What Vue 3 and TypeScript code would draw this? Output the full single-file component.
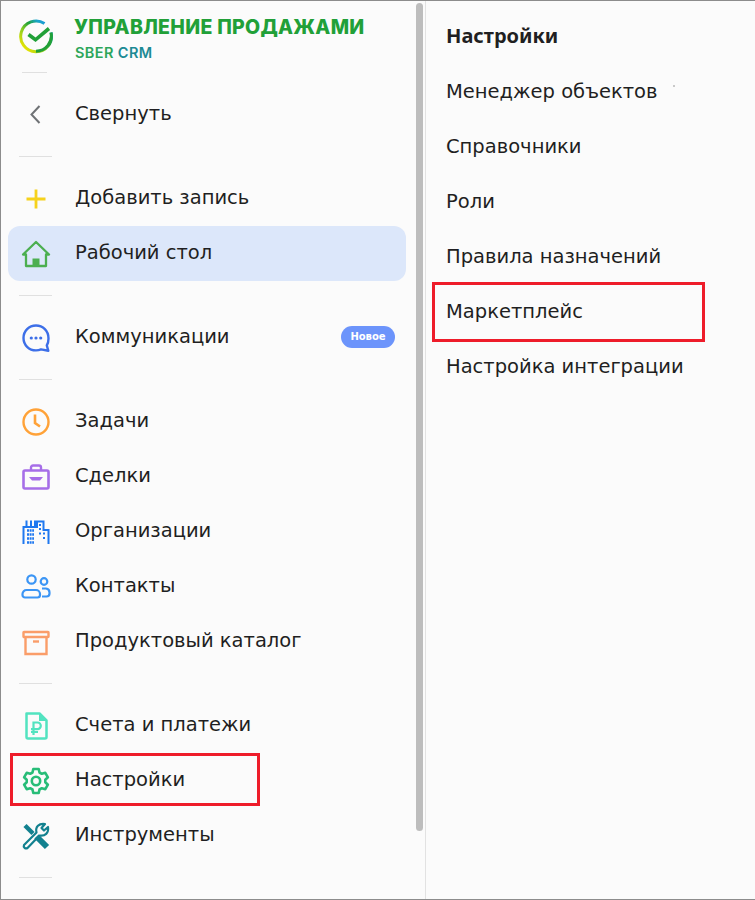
<script setup lang="ts">
type NavItem = { label: string; icon: string; active?: boolean; badge?: string; boxed?: boolean }

const groups: NavItem[][] = [
  [{ label: 'Свернуть', icon: 'back' }],
  [
    { label: 'Добавить запись', icon: 'plus' },
    { label: 'Рабочий стол', icon: 'home', active: true },
  ],
  [{ label: 'Коммуникации', icon: 'chat', badge: 'Новое' }],
  [
    { label: 'Задачи', icon: 'clock' },
    { label: 'Сделки', icon: 'case' },
    { label: 'Организации', icon: 'city' },
    { label: 'Контакты', icon: 'people' },
    { label: 'Продуктовый каталог', icon: 'box' },
  ],
  [
    { label: 'Счета и платежи', icon: 'bill' },
    { label: 'Настройки', icon: 'gear', boxed: true },
    { label: 'Инструменты', icon: 'tools' },
  ],
]

const subItems = [
  { label: 'Менеджер объектов' },
  { label: 'Справочники' },
  { label: 'Роли' },
  { label: 'Правила назначений' },
  { label: 'Маркетплейс', boxed: true },
  { label: 'Настройка интеграции' },
]
</script>

<template>
  <div class="window">
    <aside class="sidebar">
      <header class="brand">
        <svg class="logo" width="36" height="36" viewBox="0 0 36 36" fill="none">
          <defs>
            <linearGradient id="ring" x1="4" y1="30" x2="30" y2="3" gradientUnits="userSpaceOnUse">
              <stop offset="0" stop-color="#f2e500" />
              <stop offset="0.35" stop-color="#8fd01f" />
              <stop offset="0.6" stop-color="#21a038" />
              <stop offset="0.8" stop-color="#19a5c8" />
              <stop offset="1" stop-color="#1c8fe0" />
            </linearGradient>
          </defs>
          <path d="M26.5 5.500A15.400 15.400 0 1 0 33 14.500" stroke="url(#ring)" stroke-width="3" />
          <path d="M33 14.500A15.400 15.400 0 0 1 18 33.200" stroke="#21a038" stroke-width="3" />
          <path d="M10.500 16.500l7 5.300L31 10.500" stroke="#21a038" stroke-width="3.600" />
        </svg>
        <div class="brand-text">
          <div class="brand-title">УПРАВЛЕНИЕ ПРОДАЖАМИ</div>
          <div class="brand-sub"><span class="sber">SBER</span><span class="crm">CRM</span></div>
        </div>
      </header>
      <div class="rule rule-short"></div>

      <template v-for="(group, g) in groups" :key="g">
        <div v-if="g > 0" class="rule"></div>
        <div class="group">
          <div
            v-for="item in group"
            :key="item.label"
            :class="['row', { 'row-active': item.active }]"
          >
            <span class="ico">
              <svg width="30" height="30" viewBox="0 0 30 30" fill="none">
                <path v-if="item.icon === 'back'" d="M18.500 6l-8 8.500 8 8.500" stroke="#6f7275" stroke-width="2" />
                <path v-else-if="item.icon === 'plus'" d="M15 5.500v19M5.500 15h19" stroke="#f6d21c" stroke-width="2.800" />
                <template v-else-if="item.icon === 'home'">
                  <path d="M2 15.500L15 3l13 12.500H25V27H5V15.500Z" stroke="#4caf50" stroke-width="2.300" stroke-linejoin="round" />
                  <path d="M11.500 27V19.500h7V27Z" fill="#4caf50" />
                </template>
                <template v-else-if="item.icon === 'chat'">
                  <path d="M15 2.500C7.900 2.500 2.500 8 2.500 15S7.900 27.400 15 27.400c2 0 3.700-.4 5-1l7.300 1.400-1.500-5.400c1.100-2 1.700-4.400 1.700-7C27.500 8 22 2.500 15 2.500Z" stroke="#3d6fe8" stroke-width="2.400" stroke-linejoin="round" />
                  <circle cx="10.300" cy="15" r="1.600" fill="#3d6fe8" />
                  <circle cx="15" cy="15" r="1.600" fill="#3d6fe8" />
                  <circle cx="19.700" cy="15" r="1.600" fill="#3d6fe8" />
                </template>
                <template v-else-if="item.icon === 'clock'">
                  <circle cx="15" cy="15" r="12.500" stroke="#ffa238" stroke-width="2.400" />
                  <path d="M14 7.500V16l5 3.500" stroke="#ffa238" stroke-width="2.600" />
                </template>
                <template v-else-if="item.icon === 'case'">
                  <path d="M10 8.500V5.500a2 2 0 0 1 2-2h6a2 2 0 0 1 2 2v3" stroke="#a66ee8" stroke-width="2.400" />
                  <rect x="2.500" y="8.500" width="25" height="18" rx="1.500" stroke="#a66ee8" stroke-width="2.600" />
                  <path d="M8 15h14l-3 3.500h-8Z" fill="#a66ee8" />
                </template>
                <template v-else-if="item.icon === 'city'">
                  <path d="M2.500 27V10H16V4.500h6.500V13h5V27" stroke="#1f78f0" stroke-width="2" />
                  <path d="M5.500 10V3.500M10 10V3.500M14 10V3.500" stroke="#1f78f0" stroke-width="2" />
                  <path d="M6 13.500h7M6 17.500h7M6 21.500h7M6 25.500h7" stroke="#1f78f0" stroke-width="2.400" stroke-dasharray="2 .6" />
                  <path d="M18 8h2M18 12h2M18 16.500h2M22 16.500h2M22 21h2" stroke="#1f78f0" stroke-width="2.200" />
                </template>
                <template v-else-if="item.icon === 'people'">
                  <circle cx="10.500" cy="7.500" r="4.200" stroke="#3b95f5" stroke-width="2.200" />
                  <path d="M1.500 22a4 4 0 0 1 4-4h9.500a4 4 0 0 1 4 4v1a2.500 2.500 0 0 1-2.500 2.500H4A2.500 2.500 0 0 1 1.500 23Z" stroke="#3b95f5" stroke-width="2.200" />
                  <circle cx="23" cy="9.500" r="3.300" stroke="#3b95f5" stroke-width="2.200" />
                  <path d="M21 16.500h4a4 4 0 0 1 3.500 4v1a3 3 0 0 1-3 3H21" stroke="#3b95f5" stroke-width="2.200" />
                </template>
                <template v-else-if="item.icon === 'box'">
                  <rect x="2.500" y="5" width="25" height="5" rx=".5" stroke="#fa9d69" stroke-width="2.400" />
                  <path d="M4.500 10v17h21V10" stroke="#fa9d69" stroke-width="2.400" />
                  <path d="M12 14.500h6" stroke="#fa9d69" stroke-width="2.400" />
                </template>
                <template v-else-if="item.icon === 'bill'">
                  <path d="M5.500 2.500h13l7 7V26a1.500 1.500 0 0 1-1.500 1.500H7A1.500 1.500 0 0 1 5.500 26Z" stroke="#52e3c0" stroke-width="2.500" stroke-linejoin="round" />
                  <path d="M18 3v7h7" fill="#52e3c0" />
                  <path d="M12.500 24V11.500h4a3.300 3.300 0 0 1 0 6.600h-6.500M10 21h7" stroke="#52e3c0" stroke-width="2.200" />
                </template>
                <template v-else-if="item.icon === 'gear'">
                  <path d="M12.300 3h5.400l.8 3.500 2.300 1.300 3.500-1 2.600 4.500-2.600 2.500v2.400l2.600 2.500-2.600 4.500-3.500-1-2.300 1.300-.8 3.500h-5.400l-.8-3.500-2.300-1.300-3.500 1-2.600-4.500 2.600-2.500v-2.400l-2.600-2.500 2.600-4.500 3.500 1 2.300-1.300Z" stroke="#28bd78" stroke-width="2.600" stroke-linejoin="round" />
                  <circle cx="15" cy="15" r="4.200" stroke="#28bd78" stroke-width="2.600" />
                </template>
                <template v-else-if="item.icon === 'tools'">
                  <path d="M4 4.500l8 8" stroke="#12818f" stroke-width="4.400" />
                  <path d="M15.500 15.500L26 26" stroke="#12818f" stroke-width="6" />
                  <path d="M3 24L15.500 11.500C14 6 18 2 24 3l-3.500 4 2.500 2.500L27 6c1 6-3 9.500-8.500 8.500L6.500 27A2.400 2.400 0 0 1 3 24Z" stroke="#12818f" stroke-width="2.200" stroke-linejoin="round" />
                </template>
              </svg>
            </span>
            <span class="label">{{ item.label }}</span>
            <span v-if="item.badge" class="badge">{{ item.badge }}</span>
            <span v-if="item.boxed" class="mark mark-settings"></span>
          </div>
        </div>
      </template>
      <div class="rule"></div>

      <div class="scrollbar"></div>
    </aside>

    <section class="sub">
      <h2 class="sub-title">Настройки</h2>
      <div v-for="item in subItems" :key="item.label" class="sub-row">
        {{ item.label }}
        <span v-if="item.boxed" class="mark mark-market"></span>
      </div>
      <span class="speck"></span>
    </section>
  </div>
</template>

<style scoped>
.window {
  display: flex;
  width: 755px;
  height: 900px;
  box-sizing: border-box;
  overflow: hidden;
  background: #fbfbfb;
  border-top: 1px solid #8c8c8c;
  border-bottom: 1px solid #8c8c8c;
  border-left: 1px solid #8c8c8c;
  font-family: "DejaVu Sans", sans-serif;
  color: #1f1f22;
}

.sidebar {
  position: relative;
  flex: none;
  width: 425px;
  box-sizing: border-box;
  padding: 0 19px 0 7px;
  border-right: 1px solid #e2e2e2;
}

.brand {
  display: flex;
  height: 71px;
  box-sizing: border-box;
  padding-top: 17px;
}

.logo {
  flex: none;
  margin: 0 0 0 10px;
}

.brand-text {
  margin-top: -1px;
  margin-left: 20px;
}

.brand-title {
  font-family: Inter, sans-serif;
  font-size: 19.5px;
  font-weight: 800;
  letter-spacing: 0.3px;
  line-height: 20px;
  color: #21a038;
  white-space: nowrap;
}

.brand-sub {
  display: flex;
  gap: 4px;
  margin-top: 8px;
  margin-left: 1px;
  font-family: Inter, sans-serif;
  font-size: 14.5px;
  font-weight: 600;
  letter-spacing: 0.4px;
  line-height: 16px;
}

.sber {
  color: #2ea65a;
}

.crm {
  color: #1c8a94;
}

.rule {
  width: 33px;
  height: 1px;
  margin: 14px 0 14px 11px;
  background: #e0e0e0;
}

.rule-short {
  width: 25px;
  margin: 0 0 14px 14px;
}

.row {
  position: relative;
  display: flex;
  align-items: center;
  height: 55px;
  border-radius: 12px;
}

.row-active {
  background: #dce7fa;
}

.ico {
  display: flex;
  flex: none;
  width: 30px;
  height: 30px;
  margin-left: 12.5px;
}

.label {
  margin-left: 24.5px;
  padding-bottom: 2px;
  font-size: 19.5px;
  white-space: nowrap;
}

.badge {
  position: absolute;
  right: 11px;
  top: 16px;
  width: 54px;
  height: 22px;
  border-radius: 11px;
  background: #6c94fb;
  color: #fff;
  font-size: 10px;
  font-weight: 700;
  line-height: 21px;
  text-align: center;
}

.mark {
  position: absolute;
  box-sizing: border-box;
  border: 3px solid #ee1c2a;
}

.mark-settings {
  left: 2px;
  top: 0;
  width: 250px;
  height: 53px;
}

.mark-market {
  left: -14px;
  top: -1px;
  width: 273px;
  height: 60px;
}

.scrollbar {
  position: absolute;
  top: 2px;
  right: 2px;
  width: 7px;
  height: 828px;
  border-radius: 4px;
  background: #bdbdbd;
}

.sub {
  position: relative;
  flex: 1;
  padding: 7px 0 0 20px;
}

.sub-title {
  margin: 0;
  height: 55px;
  font-family: "Noto Sans", sans-serif;
  font-size: 20px;
  font-weight: 700;
  line-height: 55px;
}

.sub-row {
  position: relative;
  height: 55px;
  font-size: 19.5px;
  line-height: 57px;
  white-space: nowrap;
}

.speck {
  position: absolute;
  left: 247px;
  top: 84px;
  width: 2px;
  height: 2px;
  background: #c9c9c9;
}
</style>

<style>
html,
body {
  margin: 0;
  background: #fbfbfb;
}
</style>
